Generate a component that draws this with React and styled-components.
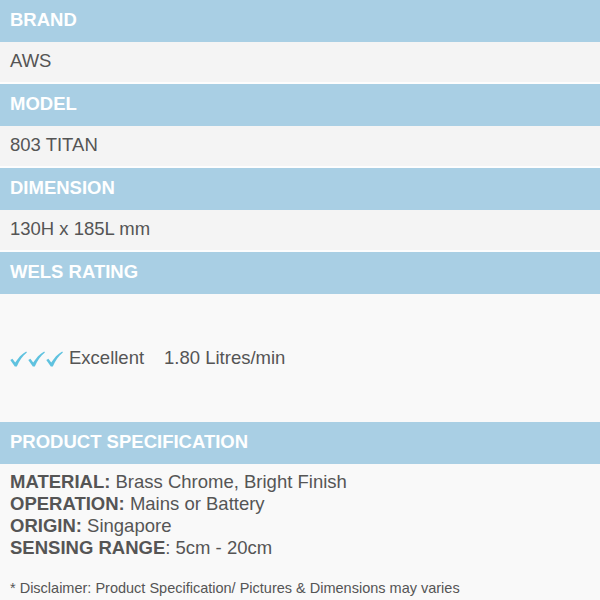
import React from 'react';
import styled, { createGlobalStyle } from 'styled-components';

const GlobalStyle = createGlobalStyle`
  html, body {
    margin: 0;
    padding: 0;
    background: #f9f9f9;
  }
  body {
    font-family: "Liberation Sans", Arial, sans-serif;
  }
`;

const Page = styled.div`
  width: 600px;
  height: 600px;
  overflow: hidden;
  background: #f9f9f9;
  color: #555;
`;

const Header = styled.div`
  height: 42px;
  box-sizing: border-box;
  padding: 0 0 3px 10px;
  display: flex;
  align-items: center;
  background-color: #a9cfe4;
  color: #fff;
  font-size: 18.5px;
  font-weight: 700;
`;

const Value = styled.div`
  height: 42px;
  box-sizing: border-box;
  padding: 0 0 2px 10px;
  display: flex;
  align-items: center;
  background-color: #f4f4f4;
  border-bottom: 2px solid #fdfdfd;
  font-size: 18.5px;
  color: #555;
`;

const RatingRow = styled.div`
  height: 128px;
  padding-left: 10px;
  display: flex;
  align-items: center;
  background-color: #f9f9f9;
  font-size: 18.5px;
  color: #555;
`;

const Checks = styled.span`
  display: flex;
  gap: 1px;
  margin-right: 6px;
  margin-top: 1px;
`;

const Flow = styled.span`
  margin-left: 20px;
`;

const SpecList = styled.div`
  padding: 7px 10px 0;
  font-size: 18.5px;
  line-height: 22px;
  color: #555;

  b {
    font-weight: 700;
  }
`;

const Disclaimer = styled.div`
  padding: 21px 10px 0;
  font-size: 14.5px;
  color: #555;
`;

// checkmark as in the WELS rating stars
const Check = () => (
  <svg width="17" height="16" viewBox="0 0 17 16">
    <path
      d="M0.3 9 L2.4 7.8 L5.2 11.6 C8 7 11.6 3 16.2 0.4 L16.9 1.6 C12.6 5 9.4 9.6 6.8 15.4 L4.8 15.6 Z"
      fill="#5fc2df"
    />
  </svg>
);

const Block = ({ title, value }) => (
  <>
    <Header>{title}</Header>
    <Value>{value}</Value>
  </>
);

const App = () => (
  <Page>
    <GlobalStyle />
    <Block title="BRAND" value="AWS" />
    <Block title="MODEL" value="803 TITAN" />
    <Block title="DIMENSION" value="130H x 185L mm" />
    <Header>WELS RATING</Header>
    <RatingRow>
      <Checks>
        <Check />
        <Check />
        <Check />
      </Checks>
      Excellent
      <Flow>1.80 Litres/min</Flow>
    </RatingRow>
    <Header>PRODUCT SPECIFICATION</Header>
    <SpecList>
      <div><b>MATERIAL:</b> Brass Chrome, Bright Finish</div>
      <div><b>OPERATION:</b> Mains or Battery</div>
      <div><b>ORIGIN:</b> Singapore</div>
      <div><b>SENSING RANGE</b>: 5cm - 20cm</div>
    </SpecList>
    <Disclaimer>* Disclaimer: Product Specification/ Pictures &amp; Dimensions may varies</Disclaimer>
  </Page>
);

export default App;
